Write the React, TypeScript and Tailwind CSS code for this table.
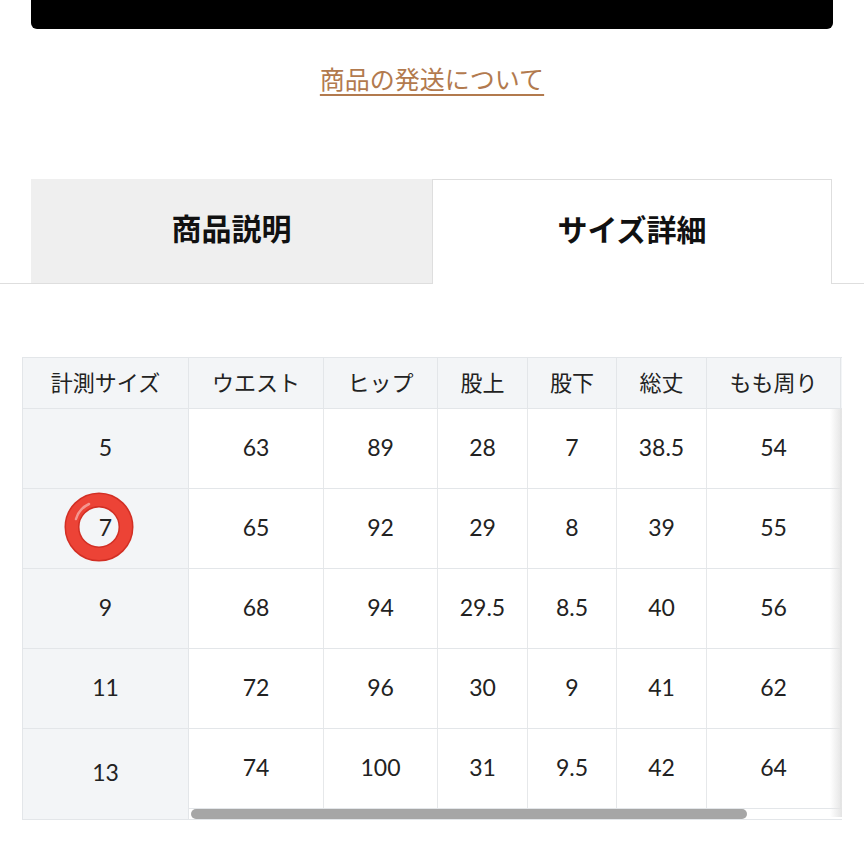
import React from 'react';

const font = { fontFamily: 'Lato, "Noto Sans CJK JP", sans-serif' };

const headers = ['ウエスト', 'ヒップ', '股上', '股下', '総丈', 'もも周り'];
const widths = ['w-[135px]', 'w-[114px]', 'w-[90px]', 'w-[89px]', 'w-[90px]', 'w-[134px]'];

const rows = [
  { size: '5', vals: ['63', '89', '28', '7', '38.5', '54'] },
  { size: '7', vals: ['65', '92', '29', '8', '39', '55'] },
  { size: '9', vals: ['68', '94', '29.5', '8.5', '40', '56'] },
  { size: '11', vals: ['72', '96', '30', '9', '41', '62'] },
  { size: '13', vals: ['74', '100', '31', '9.5', '42', '64'] },
];

const Ring = () => (
  <svg width="72" height="72" viewBox="0 0 72 72" className="absolute left-[40px] top-[2px]">
    <circle cx="36" cy="36" r="27" fill="none" stroke="#d22f24" strokeWidth="15" />
    <circle cx="36" cy="36" r="27" fill="none" stroke="#ec4336" strokeWidth="12" />
    <path d="M13 28 A24 24 0 0 1 26 13" fill="none" stroke="#ffffff" strokeOpacity="0.45" strokeWidth="2.5" strokeLinecap="round" />
  </svg>
);

const App = () => {
  return (
    <div className="w-[864px] h-[864px] bg-white overflow-hidden text-[#222]" style={font}>
      <div className="mx-[31px] h-[29px] bg-black rounded-b-[6px]" />

      <div className="mt-[32px] text-center leading-[36px]">
        <span className="text-[25px] text-[#b27a4e] underline decoration-2 underline-offset-[5px]">
          商品の発送について
        </span>
      </div>

      <div className="mt-[78px] flex px-[31px] border-b border-[#dedede]">
        <div className="w-[401px] h-[104px] pb-[5px] bg-[#efefef] flex items-center justify-center">
          <span className="text-[30px] font-bold text-[#111]">商品説明</span>
        </div>
        <div className="w-[400px] h-[105px] pb-[5px] -mb-px bg-white border border-b-0 border-[#dedede] flex items-center justify-center">
          <span className="text-[30px] font-bold text-[#111]">サイズ詳細</span>
        </div>
      </div>

      <div className="mt-[73px] ml-[22px] w-[820px] flex border-t border-b border-l border-[#e3e6e9]">
        <div className="w-[166px] shrink-0 bg-[#f3f5f7] border-r border-[#e3e6e9] text-[23px]">
          <div className="h-[51px] pb-[2px] border-b border-[#e3e6e9] flex items-center justify-center text-[22px]">計測サイズ</div>
          {rows.map((r, i) => (
            <div
              key={r.size}
              className={
                i === rows.length - 1
                  ? 'h-[89px] pb-[2px] flex items-center justify-center'
                  : 'relative h-[80px] pb-[3px] border-b border-[#e3e6e9] flex items-center justify-center'
              }
            >
              {r.size === '7' && <Ring />}
              <span className="relative">{r.size}</span>
            </div>
          ))}
        </div>

        <div className="relative flex-1 overflow-hidden">
          <div className="flex h-[51px] bg-[#f3f5f7] border-b border-[#e3e6e9] text-[22px]">
            {headers.map((h, i) => (
              <div key={h} className={`${widths[i]} shrink-0 pb-[2px] border-r border-[#e3e6e9] flex items-center justify-center`}>
                {h}
              </div>
            ))}
          </div>
          {rows.map((r) => (
            <div key={r.size} className="flex h-[80px] border-b border-[#e3e6e9] text-[23px]">
              {r.vals.map((v, i) => (
                <div key={i} className={`${widths[i]} shrink-0 pb-[3px] border-r border-[#e6e8ea] flex items-center justify-center`}>
                  {v}
                </div>
              ))}
            </div>
          ))}
          <div className="h-[10px] bg-white">
            <div className="ml-[2px] w-[556px] h-[10px] rounded-full bg-[#a6a6a6]" />
          </div>
          <div className="absolute right-0 top-[51px] bottom-[2px] w-[12px] bg-gradient-to-l from-[#e4e4e4] to-transparent" />
        </div>
      </div>
    </div>
  );
};

export default App;
